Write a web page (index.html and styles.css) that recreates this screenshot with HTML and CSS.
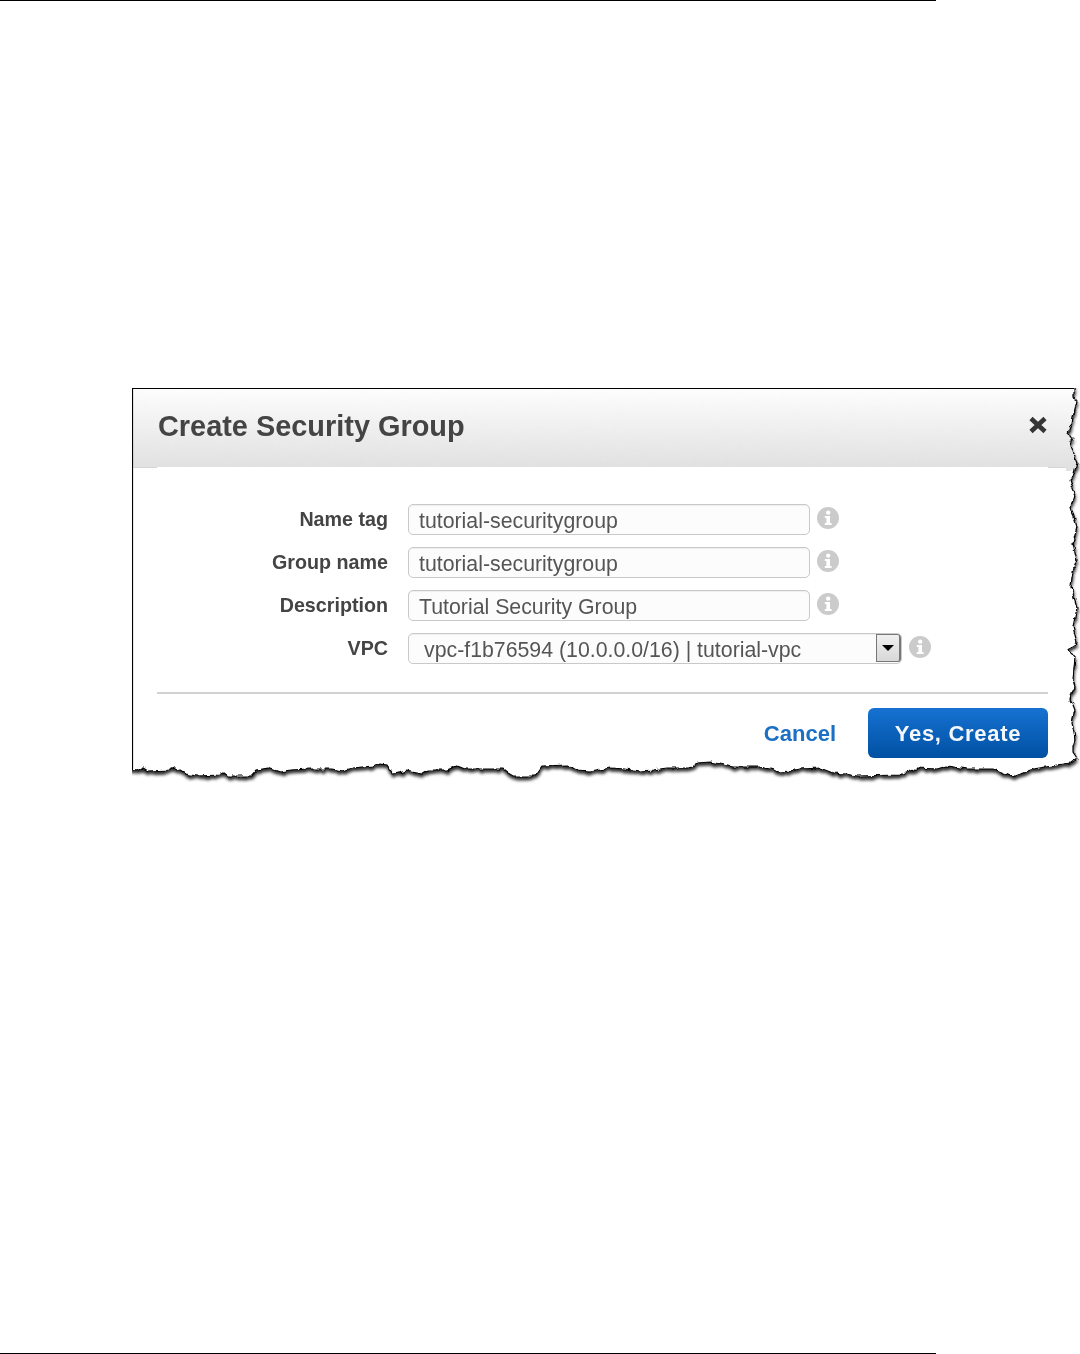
FILE: index.html
```html
<!DOCTYPE html>
<html lang="en">
<head>
    <meta charset="UTF-8">
    <meta name="viewport" content="width=device-width, initial-scale=1.0">
    <title>Create Security Group</title>
    <link rel="stylesheet" href="styles.css">
</head>
<body>
    <div class="page-rule"></div>

    <div class="shot">
        <!-- torn paper edge, drawn in page coordinates -->
        <svg class="torn" width="948" height="400" viewBox="132 388 948 400" aria-hidden="true">
            <defs>
                <linearGradient id="head-bg" gradientUnits="userSpaceOnUse" x1="0" y1="389" x2="0" y2="467">
                    <stop offset="0" stop-color="#fdfdfd"/>
                    <stop offset="1" stop-color="#e1e1e1"/>
                </linearGradient>
                <filter id="rough" filterUnits="userSpaceOnUse" x="110" y="360" width="980" height="440" color-interpolation-filters="sRGB">
                    <feTurbulence type="fractalNoise" baseFrequency="0.16" numOctaves="2" seed="7" result="noise"/>
                    <feDisplacementMap in="SourceGraphic" in2="noise" scale="5" xChannelSelector="R" yChannelSelector="G" result="torn"/>
                    <feDropShadow in="torn" dx="0.5" dy="3" stdDeviation="1.8" flood-color="#000" flood-opacity="0.8"/>
                </filter>
                <path id="edge" d="M120 376 H1074 V397 L1075 399 L1077 400 L1076 405 L1075 410 L1073 417 L1072 423 L1070 428 L1068 433 L1071 435 L1073 438 L1071 442 L1070 447 L1072 452 L1075 456 L1077 463 L1075 470 L1073 477 L1070 480 L1072 486 L1075 493 L1073 500 L1071 507 L1074 517 L1077 527 L1075 535 L1073 543 L1075 552 L1077 560 L1074 568 L1072 577 L1071 587 L1074 597 L1077 607 L1075 617 L1073 627 L1075 635 L1077 643 L1072 646 L1068 650 L1072 653 L1075 657 L1074 668 L1073 680 L1075 687 L1072 693 L1070 700 L1073 705 L1075 710 L1073 717 L1072 723 L1074 732 L1075 740 L1073 746 L1073 752 L1077 758 L1070 763 L1052 766 L1033 769 L1023 773 L1013 777 L1003 773 L993 769 L967 769 L947 766 L937 769 L917 768 L908 772 L900 775 L857 776 L845 774 L833 773 L820 768 L800 769 L790 771 L780 772 L770 769 L760 767 L733 767 L720 764 L710 762 L697 763 L690 768 L667 768 L653 770 L640 771 L625 769 L610 768 L600 770 L590 772 L578 771 L568 765 L542 766 L535 776 L513 776 L508 773 L503 769 L487 769 L465 769 L457 766 L447 770 L428 770 L422 774 L407 771 L393 774 L387 765 L380 764 L372 766 L363 767 L353 768 L342 771 L333 769 L310 769 L290 770 L280 772 L268 768 L257 770 L252 776 L228 776 L224 773 L220 775 L197 776 L185 774 L175 768 L170 770 L148 771 L143 768 L138 771 L120 769 Z"/>
                <clipPath id="edge-clip"><use href="#edge"/></clipPath>
                <clipPath id="sheet-clip"><rect x="132" y="388" width="948" height="400"/></clipPath>
            </defs>
            <g clip-path="url(#sheet-clip)">
                <g filter="url(#rough)">
                    <use href="#edge" fill="#fff"/>
                    <rect x="110" y="370" width="970" height="101" fill="url(#head-bg)" clip-path="url(#edge-clip)"/>
                    <use href="#edge" fill="none" stroke="#000" stroke-width="1.2"/>
                </g>
            </g>
            <!-- header's lower edge and the straight top and left sides stay clean -->
            <rect x="133" y="467" width="933" height="8" fill="#fff"/>
            <rect x="133" y="467" width="24" height="1" fill="#d6d6d6"/>
            <rect x="1048" y="467" width="18" height="1" fill="#d6d6d6"/>
            <path d="M1074 388.5 H132.5 V769" fill="none" stroke="#000" stroke-width="1.2"/>
        </svg>

        <div class="shot-head">
            <h1 class="shot-title">Create Security Group</h1>
            <svg class="close-x" width="20" height="18" viewBox="0 0 20 18" aria-hidden="true">
                <path d="M3 2.5 L17 15.5 M17 2.5 L3 15.5" stroke="#353535" stroke-width="4.6" fill="none"/>
            </svg>
        </div>

        <div class="form">
            <div class="row">
                <div class="row-label">Name tag</div>
                <div class="field">tutorial-securitygroup</div>
                <svg class="info" viewBox="0 0 22 22" aria-hidden="true"><circle cx="11" cy="11" r="11" fill="#cbcbcb"/><circle cx="11.2" cy="5.6" r="2.2" fill="#fff"/><path d="M7.8 9 H13 V16 H14.6 V18 H7.8 V16 H9.4 V11 H7.8 Z" fill="#fff"/></svg>
            </div>
            <div class="row">
                <div class="row-label">Group name</div>
                <div class="field">tutorial-securitygroup</div>
                <svg class="info" viewBox="0 0 22 22" aria-hidden="true"><circle cx="11" cy="11" r="11" fill="#cbcbcb"/><circle cx="11.2" cy="5.6" r="2.2" fill="#fff"/><path d="M7.8 9 H13 V16 H14.6 V18 H7.8 V16 H9.4 V11 H7.8 Z" fill="#fff"/></svg>
            </div>
            <div class="row">
                <div class="row-label">Description</div>
                <div class="field">Tutorial Security Group</div>
                <svg class="info" viewBox="0 0 22 22" aria-hidden="true"><circle cx="11" cy="11" r="11" fill="#cbcbcb"/><circle cx="11.2" cy="5.6" r="2.2" fill="#fff"/><path d="M7.8 9 H13 V16 H14.6 V18 H7.8 V16 H9.4 V11 H7.8 Z" fill="#fff"/></svg>
            </div>
            <div class="row">
                <div class="row-label">VPC</div>
                <div class="field field-select">
                    <span class="select-text">vpc-f1b76594 (10.0.0.0/16) | tutorial-vpc</span>
                    <span class="select-btn"><span class="select-arrow"></span></span>
                </div>
                <svg class="info" viewBox="0 0 22 22" aria-hidden="true"><circle cx="11" cy="11" r="11" fill="#cbcbcb"/><circle cx="11.2" cy="5.6" r="2.2" fill="#fff"/><path d="M7.8 9 H13 V16 H14.6 V18 H7.8 V16 H9.4 V11 H7.8 Z" fill="#fff"/></svg>
            </div>
        </div>

        <div class="actions">
            <a class="cancel">Cancel</a>
            <button class="create">Yes, Create</button>
        </div>
    </div>

    <div class="page-rule page-rule-bottom"></div>
</body>
</html>
```

FILE: styles.css
```css
body {
    font-family: "Liberation Sans", Arial, sans-serif;
    display: flex;
    flex-direction: column;
    height: 1354px;
    margin: 0;
    background: #fff;
    overflow: hidden;
}
.page-rule {
    width: 936px;
    height: 1px;
    background: #000;
    flex: none;
}
.page-rule-bottom {
    margin-top: auto;
}
.shot {
    position: relative;
    width: 940px;
    margin: 388px 0 0 133px;
    filter: blur(0.4px);
}
.torn {
    position: absolute;
    left: -1px;
    top: -1px;
}
.shot-head {
    position: relative;
    display: flex;
    justify-content: space-between;
    align-items: center;
    height: 78px;
    padding: 0 25px;
}
.shot-title {
    margin: 0 0 3px;
    font-size: 28.9px;
    font-weight: bold;
    color: #444;
}
.close-x {
    margin-bottom: 6px;
}
.form {
    position: relative;
    display: flex;
    flex-direction: column;
    gap: 12px;
    padding-top: 37px;
}
.row {
    display: flex;
    align-items: center;
    height: 31px;
}
.row-label {
    width: 255px;
    margin-right: 20px;
    font-size: 19.7px;
    font-weight: bold;
    text-align: right;
    color: #444;
}
.field {
    width: 402px;
    height: 31px;
    box-sizing: border-box;
    padding-left: 10px;
    border: 1.5px solid #c9c9c9;
    border-radius: 5px;
    background: #fcfcfc;
    box-shadow: inset 0 1px 1px #eee;
    font-size: 21.3px;
    line-height: 33px;
    color: #555;
}
.field-select {
    display: flex;
    justify-content: space-between;
    align-items: flex-start;
    width: 494px;
    padding-left: 15px;
    overflow: hidden;
}
.select-btn {
    display: flex;
    justify-content: center;
    align-items: center;
    width: 25px;
    height: 28px;
    box-sizing: border-box;
    border: 1px solid #777;
    border-right-width: 2px;
    border-radius: 0 3px 3px 0;
    background: linear-gradient(#f0f0f0, #d8d8d8);
}
.select-arrow {
    width: 0;
    height: 0;
    border-left: 6px solid transparent;
    border-right: 6px solid transparent;
    border-top: 6px solid #000;
}
.info {
    flex: none;
    width: 22px;
    height: 22px;
    margin: 0 0 4px 7px;
}
.actions {
    position: relative;
    display: flex;
    justify-content: flex-end;
    align-items: center;
    gap: 32px;
    margin: 28px 25px 0 24px;
    padding-top: 14px;
    border-top: 2px solid #d2d2d2;
}
.cancel {
    margin-top: 2px;
    font-size: 22px;
    font-weight: bold;
    color: #1b6fc5;
}
.create {
    width: 180px;
    height: 50px;
    padding: 2px 0 0;
    border: none;
    border-radius: 6px;
    background: linear-gradient(#1672d2, #0050a2);
    font-family: inherit;
    font-size: 22px;
    font-weight: bold;
    letter-spacing: 0.7px;
    color: #f4f8fc;
}
```
